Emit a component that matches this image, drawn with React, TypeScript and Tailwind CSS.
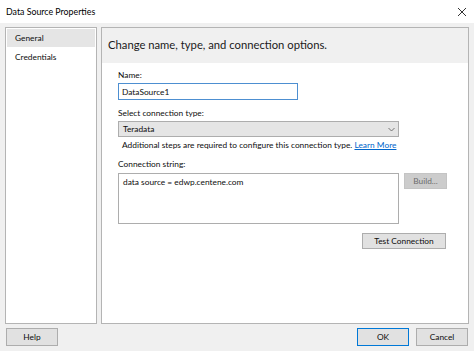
import React from "react"

export default function App() {
  return (
    <div className="w-[474px] h-[351px] bg-[#f0f0f0] flex flex-col text-[#0d0d0d] font-['Lato',sans-serif] text-[8.35px] overflow-hidden">
      {/* title bar */}
      <div className="h-[23px] bg-white flex items-center justify-between pl-[6px] pr-[7px] shrink-0">
        <span className="text-[8.8px] text-black">Data Source Properties</span>
        <svg width="10" height="10" viewBox="0 0 10 10" className="text-[#333]">
          <path d="M1 1 L9 9 M9 1 L1 9" stroke="currentColor" strokeWidth="1" />
        </svg>
      </div>

      <div className="flex gap-[4px] px-[5px] pt-[4px] h-[301px] shrink-0">
        {/* nav */}
        <div className="w-[92px] bg-white border border-[#b4b4b4] flex flex-col pt-[1px] px-[1px]">
          <div className="h-[18px] bg-[#e5e5e5] flex items-center pl-[8px]">General</div>
          <div className="h-[20px] flex items-center pl-[8px]">Credentials</div>
        </div>

        {/* main panel */}
        <div className="flex-1 bg-white border border-[#b4b4b4] flex flex-col">
          <div className="h-[35px] bg-[#f0f0f0] flex items-center pl-[6px] text-[11.25px] text-[#1a1a1a]">
            Change name, type, and connection options.
          </div>
          <div className="pl-[16px] pt-[5px] flex flex-col">
            <div className="h-[14px] leading-[14px]">Name:</div>
            <input
              defaultValue="DataSource1"
              className="mt-[1px] w-[180px] h-[17px] border border-[#4d8fd1] px-[3px] text-[8.35px] outline-none"
            />
            <div className="mt-[6px] h-[14px] leading-[14px]">Select connection type:</div>
            <div className="mt-[1px] w-[281px] h-[16px] bg-[#e5e5e5] border border-[#adadad] flex items-center justify-between pl-[4px] pr-[3px]">
              <span>Teradata</span>
              <svg width="7" height="5" viewBox="0 0 7 5">
                <path d="M0.5 1 L3.5 4 L6.5 1" stroke="#666" fill="none" strokeWidth="0.9" />
              </svg>
            </div>
            <div className="mt-[1px] pl-[4px] h-[14px] leading-[14px] whitespace-nowrap">
              Additional steps are required to configure this connection type.{" "}
              <span className="text-[#0066cc] underline">Learn More</span>
            </div>
            <div className="mt-[5px] h-[14px] leading-[14px]">Connection string:</div>
            <div className="mt-[2px] flex gap-[5px]">
              <div className="w-[281px] h-[51px] border border-[#adadad] px-[4px] pt-[2px]">
                data source = edwp.centene.com
              </div>
              <div className="w-[43px] h-[16px] bg-[#cccccc] border border-[#c4c4c4] flex items-center justify-center text-[#6d6d6d]">
                Build...
              </div>
            </div>
            <div className="mt-[9px] flex justify-end pr-[22px]">
              <div className="w-[84px] h-[16px] bg-[#e1e1e1] border border-[#adadad] flex items-center justify-center">
                Test Connection
              </div>
            </div>
          </div>
        </div>
      </div>

      {/* footer */}
      <div className="flex items-center justify-between px-[6px] pt-[4px]">
        <div className="w-[52px] h-[18px] bg-[#e1e1e1] border border-[#adadad] flex items-center justify-center">Help</div>
        <div className="flex gap-[7px]">
          <div className="w-[52px] h-[18px] bg-[#e1e1e1] border border-[#0078d7] flex items-center justify-center">OK</div>
          <div className="w-[52px] h-[18px] bg-[#e1e1e1] border border-[#adadad] flex items-center justify-center">Cancel</div>
        </div>
      </div>
    </div>
  )
}
